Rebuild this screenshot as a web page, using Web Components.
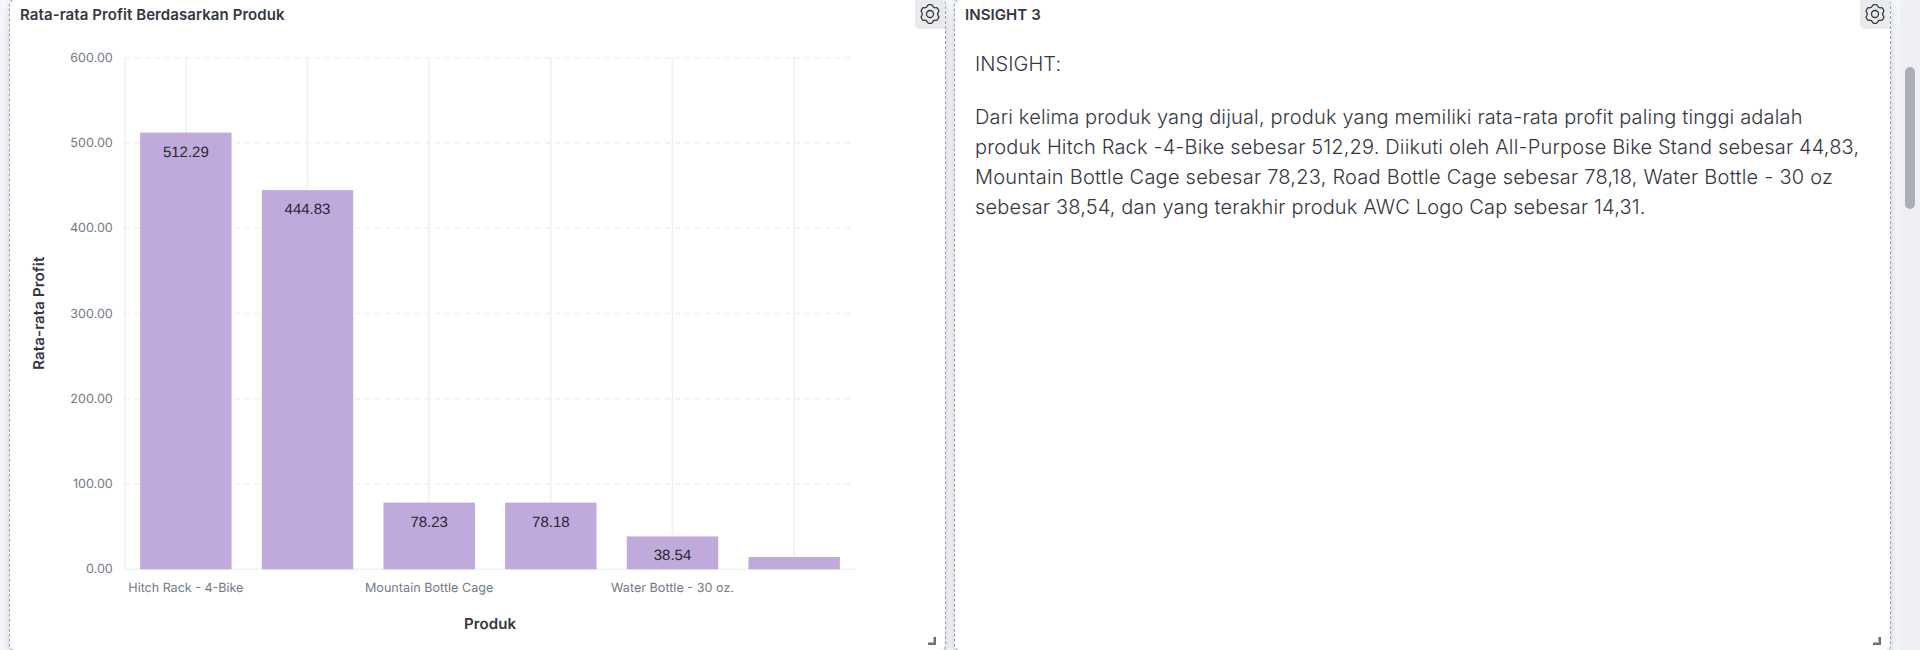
<!DOCTYPE html>
<html lang="id">
<head>
<meta charset="utf-8">
<title>Dashboard</title>
<style>
html,body{margin:0;height:100%;overflow:hidden;font-family:Inter,"Liberation Sans",sans-serif;background:#f4f6fa}
</style>
</head>
<body>
<dash-board>
  <dash-panel heading="Rata-rata Profit Berdasarkan Produk"><bar-chart></bar-chart></dash-panel>
  <dash-panel heading="INSIGHT 3">
    <insight-text>
      <p style="letter-spacing:.05px">INSIGHT:</p>
      <p>Dari kelima produk yang dijual, produk yang memiliki rata-rata profit paling tinggi adalah<br>produk Hitch Rack -4-Bike sebesar 512,29. Diikuti oleh All-Purpose Bike Stand sebesar 44,83,<br><span style="letter-spacing:.24px">Mountain Bottle Cage sebesar 78,23, Road Bottle Cage sebesar 78,18, Water Bottle - 30 oz</span><br>sebesar 38,54, dan yang terakhir produk AWC Logo Cap sebesar 14,31.</p>
    </insight-text>
  </dash-panel>
</dash-board>
<script>
const define = (name, html, setup) => customElements.define(name, class extends HTMLElement {
  constructor() {
    super();
    this.attachShadow({mode: 'open'}).innerHTML = html;
  }
  connectedCallback() { if (setup) setup(this, this.shadowRoot); }
});

define('gear-button', `
<style>
:host{display:flex;width:30px;height:29px;background:#e9eaec;border-radius:0 5px 0 5px;justify-content:center}
svg{width:22px;height:22px;margin-top:3px;display:block}
</style>
<svg viewBox="-11 -11 22 22" fill="none" stroke="#343741" stroke-width="1.3" stroke-linejoin="round"><path/><circle r="3.5"/></svg>`,
(host, root) => {
  const pt = (x, y, a) => {
    const t = a * Math.PI / 180;
    return (x * Math.cos(t) - y * Math.sin(t)).toFixed(2) + ' ' + (x * Math.sin(t) + y * Math.cos(t)).toFixed(2);
  };
  let d = '';
  for (let a = 0; a < 360; a += 60) {
    d += (a ? 'L' : 'M') + pt(-2.5, -8.2, a)
      + 'Q' + pt(-2.2, -9.4, a) + ' ' + pt(-1.1, -9.4, a)
      + 'L' + pt(1.1, -9.4, a)
      + 'Q' + pt(2.2, -9.4, a) + ' ' + pt(2.5, -8.2, a)
      + 'Q' + pt(3.4, -5.9, a) + ' ' + pt(-2.5, -8.2, a + 60);
  }
  root.querySelector('path').setAttribute('d', d + 'Z');
});

define('dash-board', `
<style>
:host{display:flex;height:650px;overflow:hidden}
.grid{flex:1;display:flex;gap:8px;margin-top:-1px;padding:0 9px;height:652px}
.rail{width:20px;background:#eff0f5;display:flex;justify-content:center}
.thumb{width:10px;height:142px;margin-top:67px;border-radius:5px;background:#abaeb8}
</style>
<div class="grid"><slot></slot></div>
<div class="rail"><div class="thumb"></div></div>`);

define('dash-panel', `
<style>
:host{flex:1 1 0;min-width:0;box-sizing:border-box;display:flex;flex-direction:column;position:relative;background:#fff;border:1px dashed #98a2b3;border-radius:6px;
box-shadow:0 1px 4px 0 rgba(0,0,0,.05),0 3px 8px -1px rgba(0,0,0,.06),0 6px 12px -1px rgba(0,0,0,.05),0 15px 15px -1px rgba(0,0,0,.04)}
header{display:flex;justify-content:space-between;height:30px}
h2{margin:0;padding-left:10px;font-size:15px;letter-spacing:.08px;font-weight:600;line-height:30px;color:#343741;white-space:nowrap}
.body{flex:1;min-height:0}
.grip{position:absolute;right:9px;bottom:5px;width:5px;height:5px;border-right:2px solid #69707d;border-bottom:2px solid #69707d}
.grip{box-shadow:inset -1px -1px 0 #b4b8be;padding:1px 0 0 1px}
</style>
<header><h2></h2><gear-button></gear-button></header>
<div class="body"><slot></slot></div>
<div class="grip"></div>`,
(host, root) => { root.querySelector('h2').textContent = host.getAttribute('heading'); });

define('insight-text', `
<style>
:host{display:block;padding:19px 20px 0;font-size:20px;letter-spacing:.16px;font-weight:300;line-height:30px;color:#343741;white-space:nowrap}
::slotted(p){margin:0 0 23px}
</style><slot></slot>`);

define('bar-chart', `
<style>
:host{display:block}
svg{display:block;width:935px;height:610px;text-rendering:geometricPrecision}
.tick{font-size:12.6px;fill:#747985}
.val{font:15px "Liberation Sans",sans-serif;fill:#2a2530}
.axis{font-size:15px;font-weight:600;fill:#343741}
text{text-anchor:middle}
</style>
<svg viewBox="10 30 935 610"></svg>`,
(host, root) => {
  const items = [['Hitch Rack - 4-Bike', 512.29, 115], ['', 444.83], ['Mountain Bottle Cage', 78.23, 128.5], ['', 78.18], ['Water Bottle - 30 oz.', 38.54, 123], ['', 14.31]];
  const left = 125, step = 121.67, zero = 569.3, unit = 0.8525;
  let s = '';
  for (let v = 0; v <= 600; v += 100) {
    const y = zero - v * unit;
    s += `<path d="M${left} ${y}H855" stroke="#eeeff7" stroke-width="1.5" ${v ? 'stroke-dasharray="5 5"' : ''}/>`;
    s += `<text class="tick" style="text-anchor:end" x="112.8" y="${y + 4}">${v}.00</text>`;
  }
  s += `<path d="M${left} 57.5V${zero}" stroke="#eeeff7" stroke-width="1.5"/>`;
  items.forEach(([name, v, w], i) => {
    const x = left + step * (i + .5), y = zero - v * unit;
    s += `<path d="M${x} 57.5V${zero}" stroke="#eeeff7" stroke-width="1.5"/>`;
    s += `<rect x="${x - 45.7}" y="${y}" width="91.4" height="${zero - y}" fill="#bfaadb"/>`;
    if (v > 20) s += `<text class="val" x="${x}" y="${y + 24}">${v}</text>`;
    if (name) s += `<text class="tick" x="${x}" y="592" textLength="${w}">${name}</text>`;
  });
  s += `<text class="axis" x="490" y="628.7" textLength="52">Produk</text>`;
  s += `<text class="axis" transform="translate(44.4 313.3) rotate(-90)" textLength="113">Rata-rata Profit</text>`;
  root.querySelector('svg').innerHTML = s;
});
</script>
</body>
</html>
